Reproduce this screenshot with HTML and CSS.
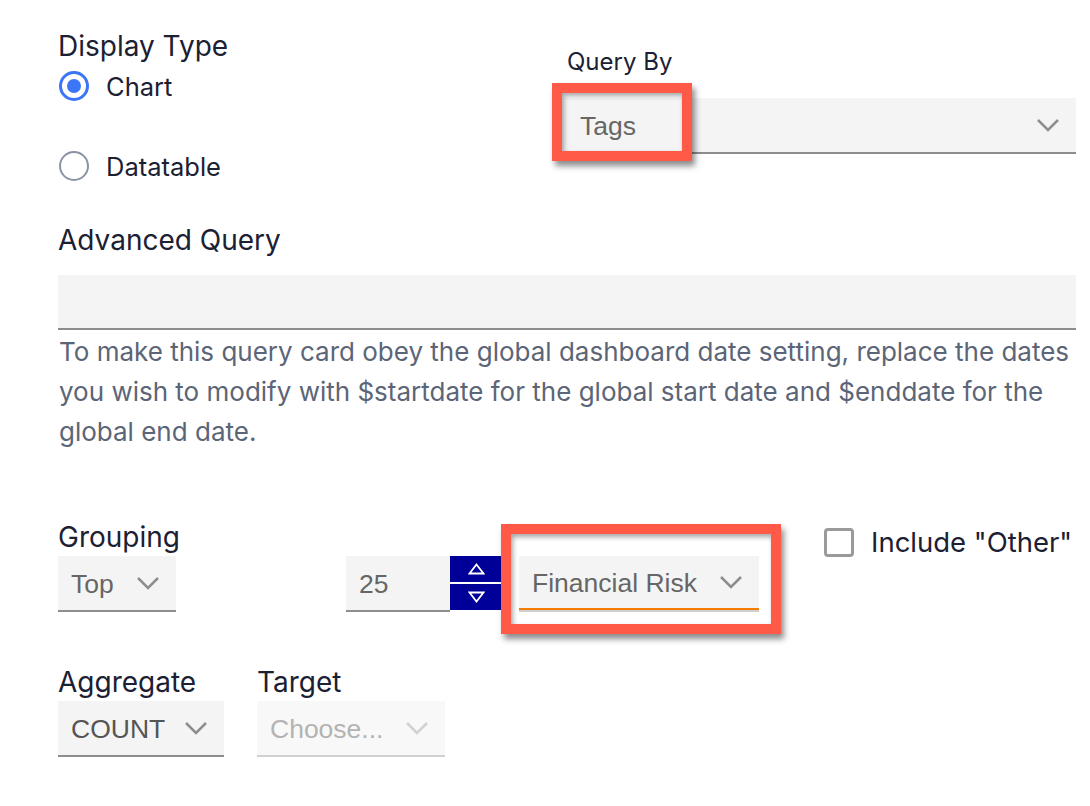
FILE: index.html
```html
<!DOCTYPE html>
<html>
<head>
<meta charset="utf-8">
<link rel="stylesheet" href="styles.css">
</head>
<body>
<div class="page">
  <div class="top">
    <div class="col-left">
      <div class="label">Display Type</div>
      <div class="radio-row">
        <span class="radio checked"><span class="dot"></span></span>
        <span class="radio-text">Chart</span>
      </div>
      <div class="radio-row">
        <span class="radio"></span>
        <span class="radio-text">Datatable</span>
      </div>
    </div>
    <div class="col-right">
      <div class="label small">Query By</div>
      <div class="select wide hl-wrap">
        <span class="val">Tags</span>
        <svg class="chev" width="24" height="14" viewBox="0 0 24 14"><path d="M2 2 L12 12 L22 2" fill="none" stroke="#8d8d8d" stroke-width="2.5"/></svg>
        <div class="highlight hl-tags"></div>
      </div>
    </div>
  </div>

  <div class="label adv-label">Advanced Query</div>
  <div class="input-box"></div>
  <p class="help">To make this query card obey the global dashboard date setting, replace the dates you wish to modify with $startdate for the global start date and $enddate for the global end date.</p>

  <div class="row grouping">
    <div class="field field-top">
      <div class="label">Grouping</div>
      <div class="select sel-top">
        <span class="val">Top</span>
        <svg class="chev" width="24" height="14" viewBox="0 0 24 14"><path d="M2 2 L12 12 L22 2" fill="none" stroke="#8d8d8d" stroke-width="2.5"/></svg>
      </div>
    </div>
    <div class="number">
      <span class="num-val">25</span>
      <div class="stepper">
        <div class="step"><svg width="17" height="12" viewBox="0 0 17 12"><path d="M8.5 1.5 L15.5 10.5 L1.5 10.5 Z" fill="none" stroke="#fff" stroke-width="1.8"/></svg></div>
        <div class="step"><svg width="17" height="12" viewBox="0 0 17 12"><path d="M1.5 1.5 L15.5 1.5 L8.5 10.5 Z" fill="none" stroke="#fff" stroke-width="1.8"/></svg></div>
      </div>
    </div>
    <div class="select sel-fin hl-wrap">
      <span class="val">Financial Risk</span>
      <svg class="chev" width="24" height="14" viewBox="0 0 24 14"><path d="M2 2 L12 12 L22 2" fill="none" stroke="#8d8d8d" stroke-width="2.5"/></svg>
      <div class="highlight hl-fin"></div>
    </div>
    <div class="check">
      <span class="box"></span>
      <span class="check-text">Include "Other"</span>
    </div>
  </div>

  <div class="row aggregate">
    <div class="field">
      <div class="label">Aggregate</div>
      <div class="select sel-count">
        <span class="val">COUNT</span>
        <svg class="chev" width="24" height="14" viewBox="0 0 24 14"><path d="M2 2 L12 12 L22 2" fill="none" stroke="#8d8d8d" stroke-width="2.5"/></svg>
      </div>
    </div>
    <div class="field target">
      <div class="label">Target</div>
      <div class="select sel-target disabled">
        <span class="val">Choose...</span>
        <svg class="chev" width="24" height="14" viewBox="0 0 24 14"><path d="M2 2 L12 12 L22 2" fill="none" stroke="#d2d2d2" stroke-width="2.5"/></svg>
      </div>
    </div>
  </div>
</div>
</body>
</html>
```

FILE: styles.css
```css
* { box-sizing: border-box; }
html, body { margin: 0; padding: 0; background: #fff; }
body { font-family: Inter, "Noto Sans", sans-serif; color: #1b2033; }

.page {
  width: 1090px;
  padding: 30px 14px 0 58px;
}

.label {
  font-size: 28px;
  line-height: 32px;
  color: #1b2033;
  white-space: nowrap;
}
.label.small { font-size: 24px; line-height: 28px; padding-left: 9px; }

.top { display: flex; }
.col-left { width: 500px; }
.col-right { flex: 1; padding-top: 18px; }
.col-right .label { margin-bottom: 22px; }

.radio-row {
  display: flex;
  align-items: center;
  height: 36px;
  margin-top: 6px;
  margin-bottom: 44px;
}
.radio-row + .radio-row { margin-top: 0; margin-bottom: 0; }
.radio {
  width: 30px; height: 30px;
  border-radius: 50%;
  border: 2.5px solid #8a94a6;
  display: flex; align-items: center; justify-content: center;
  margin-left: 1px;
}
.radio.checked { border: 3px solid #3b76f6; }
.radio .dot { width: 14px; height: 14px; border-radius: 50%; background: #3b76f6; }
.radio-text { font-size: 25.5px; margin-left: 17px; color: #1b2033; }

.select {
  position: relative;
  height: 56px;
  background: #f4f4f4;
  border-bottom: 2px solid #8d8d8d;
  display: flex;
  align-items: center;
  justify-content: space-between;
  padding: 0 16px 0 13px;
  font-family: "Liberation Sans", Arial, sans-serif;
  font-size: 26.5px;
  color: #666;
}
.select .val { padding-top: 2px; }
.select .chev { flex: none; }
.select.wide { width: 518px; padding-left: 22px; }

.highlight {
  position: absolute;
  border: 10px solid #ff5a47;
  box-shadow: 3px 5px 6px rgba(0,0,0,0.45), inset 2px 3px 5px rgba(0,0,0,0.35);
  pointer-events: none;
}
.hl-tags { left: -6px; top: -15px; width: 140px; height: 78px; }
.hl-fin { left: -18px; top: -32px; width: 280px; height: 110px; }

.adv-label { margin-top: 40px; margin-bottom: 19px; }
.input-box {
  width: 1018px;
  height: 55px;
  background: #f4f4f4;
  border-bottom: 2px solid #8d8d8d;
}
.help {
  margin: 2px 0 0 1px;
  font-size: 26px;
  line-height: 40px;
  color: #5b6577;
  width: 1018px;
}

.row { display: flex; align-items: flex-start; }
.grouping { margin-top: 69px; }
.field { flex: none; }
.field .label { margin-bottom: 3px; }
.field-top { width: 118px; }

.sel-top { width: 118px; }
.number {
  margin-left: 170px;
  margin-top: 35px;
  display: flex;
  height: 56px;
}
.num-val {
  width: 104px;
  height: 56px;
  background: #f4f4f4;
  border-bottom: 2px solid #8d8d8d;
  font-family: "Liberation Sans", Arial, sans-serif;
  font-size: 26.5px;
  color: #666;
  padding-left: 13px;
  padding-top: 2px;
  display: flex;
  align-items: center;
}
.stepper {
  width: 52px;
  height: 54px;
  display: flex;
  flex-direction: column;
  gap: 2px;
  background: #fff;
}
.step {
  flex: 1;
  background: #000099;
  display: flex;
  align-items: center;
  justify-content: center;
}
.sel-fin {
  width: 240px;
  margin-left: 17px;
  margin-top: 35px;
  border-bottom: 2px solid #f57c00;
  box-shadow: 0 2px 0 #cfcfcf;
  height: 54px;
}
.check {
  display: flex;
  align-items: center;
  margin-left: 65px;
  margin-top: 4px;
}
.check .box {
  width: 30px; height: 29px;
  border: 3px solid #9a9a9a;
  border-radius: 4px;
}
.check-text {
  font-family: Inter, "Noto Sans", sans-serif;
  font-size: 27.5px;
  color: #1b2033;
  margin-left: 17px;
  white-space: nowrap;
}

.aggregate { margin-top: 54px; }
.sel-count { width: 166px; color: #555; }
.target { margin-left: 33px; }
.sel-target { width: 188px; }
.select.disabled { background: #f8f8f8; color: #b3b3b3; border-bottom-color: #d0d0d0; }
```
